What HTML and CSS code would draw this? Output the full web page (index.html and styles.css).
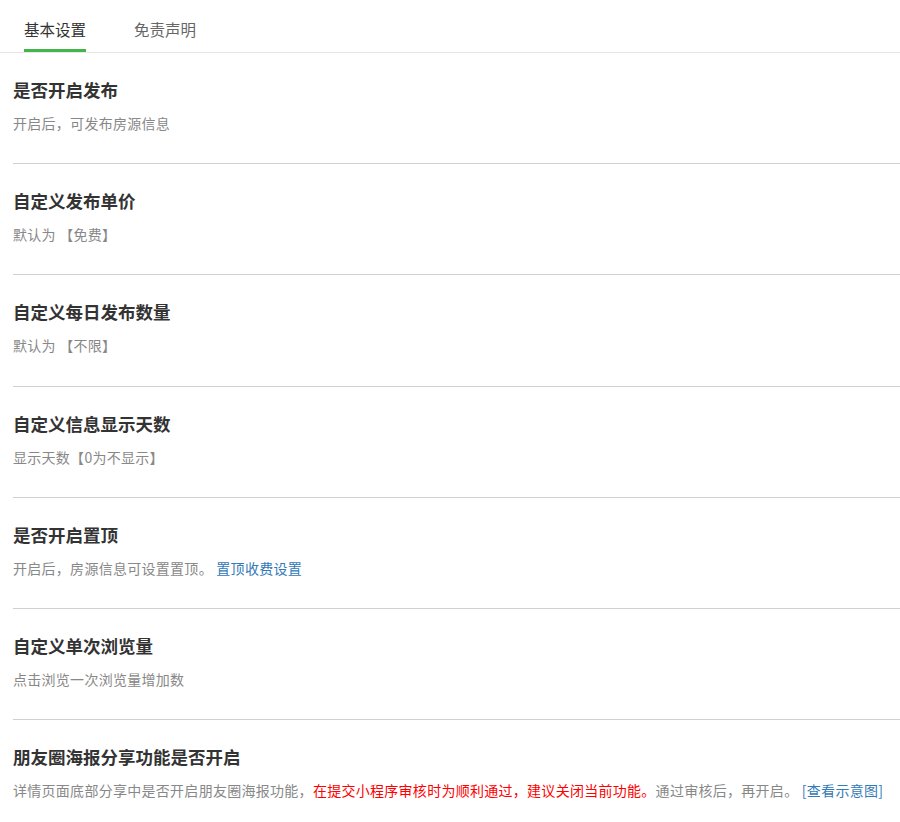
FILE: index.html
```html
<!DOCTYPE html>
<html lang="zh-CN">
  <head>
    <meta charset="UTF-8" />
    <meta name="viewport" content="width=device-width, initial-scale=1.0" />
    <title>基本设置</title>
    <link rel="stylesheet" href="styles.css">
  </head>
  <body>
    <div class="tabs">
      <a class="tab active" href="#">基本设置</a>
      <a class="tab" href="#">免责声明</a>
    </div>

    <div class="settings">
      <div class="setting-item">
        <h3>是否开启发布</h3>
        <p>开启后，可发布房源信息</p>
      </div>
      <div class="setting-item">
        <h3>自定义发布单价</h3>
        <p>默认为 【免费】</p>
      </div>
      <div class="setting-item">
        <h3>自定义每日发布数量</h3>
        <p>默认为 【不限】</p>
      </div>
      <div class="setting-item">
        <h3>自定义信息显示天数</h3>
        <p>显示天数【0为不显示】</p>
      </div>
      <div class="setting-item">
        <h3>是否开启置顶</h3>
        <p>开启后，房源信息可设置置顶。 <a href="#">置顶收费设置</a></p>
      </div>
      <div class="setting-item">
        <h3>自定义单次浏览量</h3>
        <p>点击浏览一次浏览量增加数</p>
      </div>
      <div class="setting-item last">
        <h3>朋友圈海报分享功能是否开启</h3>
        <p>详情页面底部分享中是否开启朋友圈海报功能，<span class="warn">在提交小程序审核时为顺利通过，建议关闭当前功能。</span>通过审核后，再开启。 <a href="#">[查看示意图]</a></p>
      </div>
    </div>
  </body>
</html>
```

FILE: styles.css
```css
body {
  margin: 0;
  font-family: "Noto Sans CJK SC", "Liberation Sans", sans-serif;
  background-color: white;
  color: #333;
}
.tabs {
  display: flex;
  height: 52px;
  border-bottom: 1px solid #e7e7eb;
}
.tab {
  position: relative;
  padding: 0 24px;
  line-height: 58px;
  font-size: 15.5px;
  color: #666;
  text-decoration: none;
}
.tab.active {
  color: #333;
}
.tab.active::after {
  content: "";
  position: absolute;
  left: 24px;
  right: 24px;
  bottom: 0;
  height: 3px;
  background-color: #44b549;
}
.settings {
  padding-left: 13px;
}
.setting-item {
  padding: 25px 0 30.2px;
  border-bottom: 1px solid #d0d0d0;
}
.setting-item.last {
  border-bottom: none;
}
.setting-item h3 {
  margin: 0;
  font-size: 17.5px;
  line-height: 24px;
  font-weight: bold;
  color: #333;
}
.setting-item p {
  margin: 11px 0 0;
  font-size: 14px;
  line-height: 20px;
  letter-spacing: 0.28px;
  color: #888;
}
.setting-item a {
  color: #337ab7;
  text-decoration: none;
}
.warn {
  color: #ff0000;
}
```
